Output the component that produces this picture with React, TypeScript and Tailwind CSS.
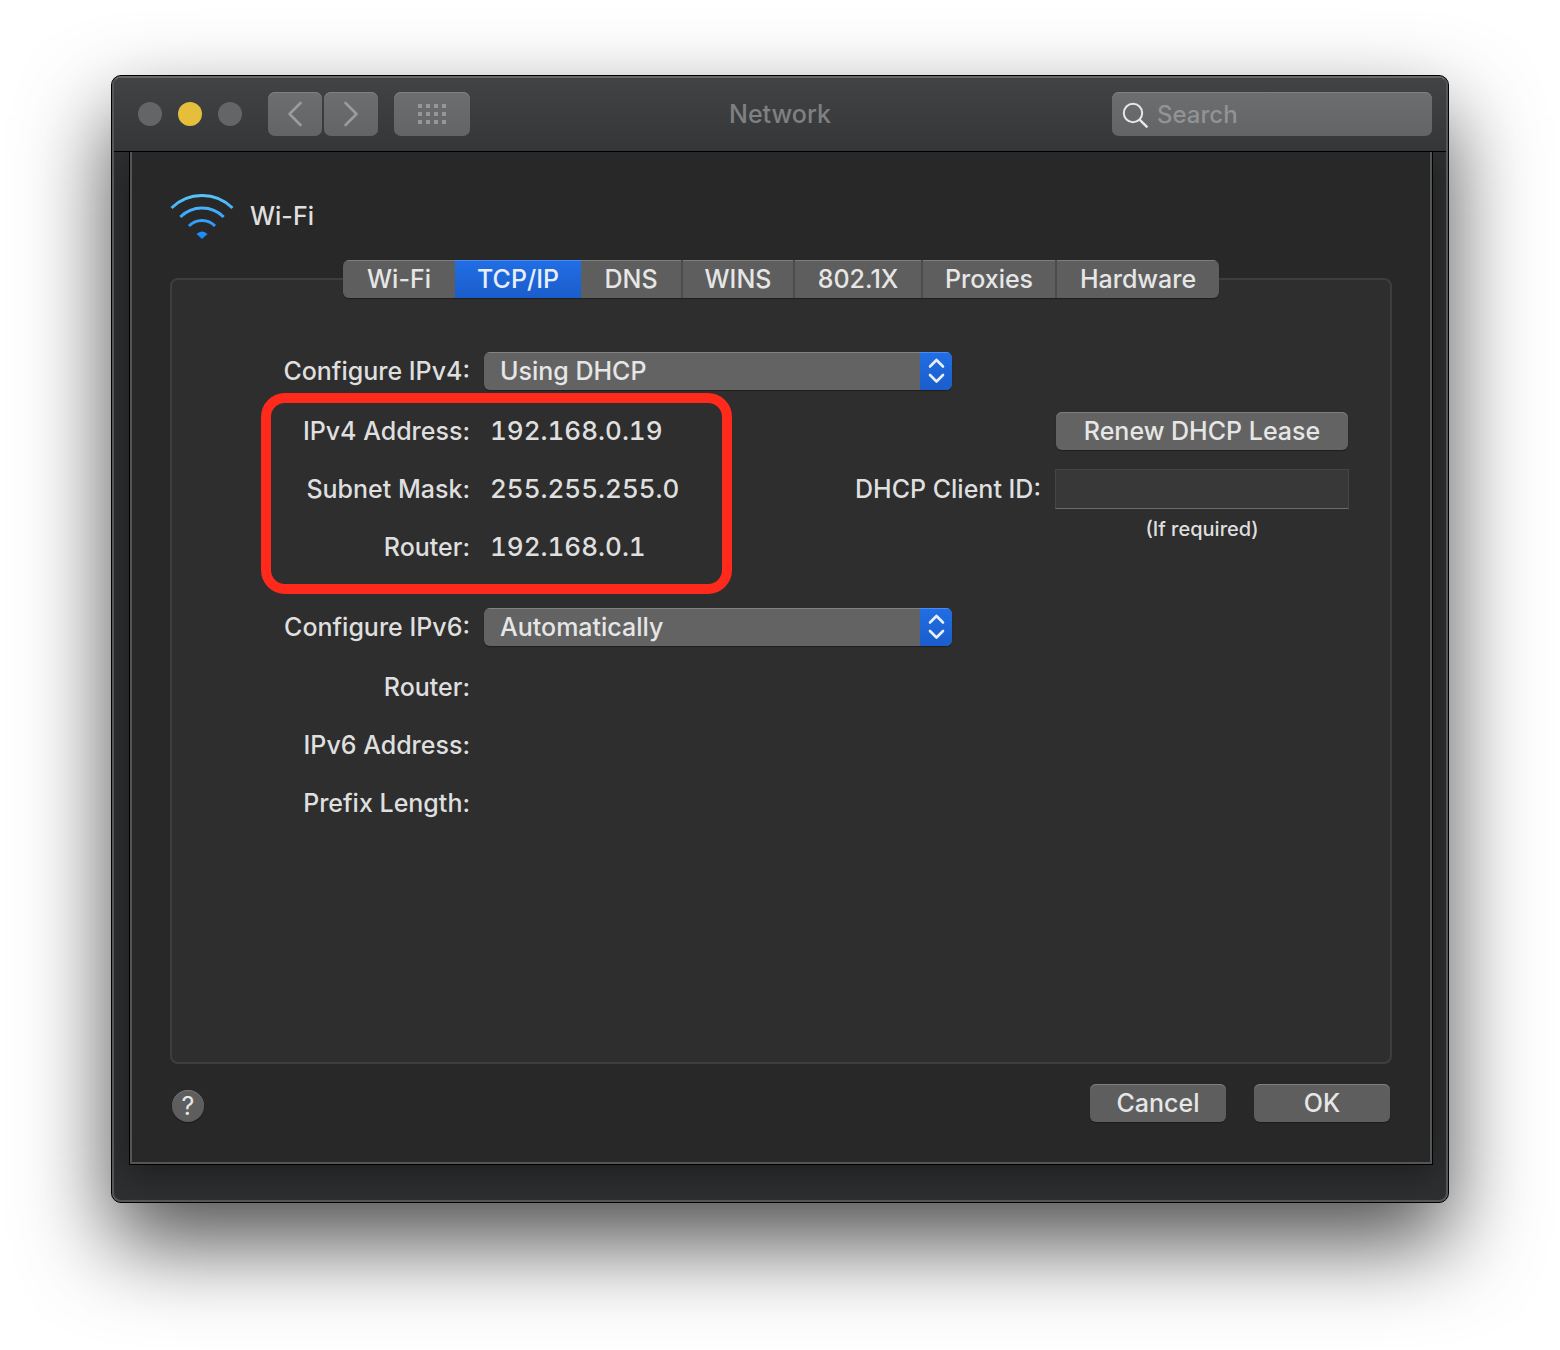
import { useState } from "react";
import type { ReactNode } from "react";
import clsx from "clsx";

const TABS = [
  { name: "Wi-Fi", width: "w-[112px]" },
  { name: "TCP/IP", width: "w-[126px]" },
  { name: "DNS", width: "w-[102px]" },
  { name: "WINS", width: "w-[112px]" },
  { name: "802.1X", width: "w-[128px]" },
  { name: "Proxies", width: "w-[134px]" },
  { name: "Hardware", width: "w-[162px]" },
];

const IPV4_ROWS = [
  { label: "IPv4 Address:", value: "192.168.0.19" },
  { label: "Subnet Mask:", value: "255.255.255.0" },
  { label: "Router:", value: "192.168.0.1" },
];

const IPV6_ROWS = [
  { label: "Router:", value: "" },
  { label: "IPv6 Address:", value: "" },
  { label: "Prefix Length:", value: "" },
];

function WifiIcon() {
  return (
    <svg width="64" height="46" viewBox="0 0 64 46" fill="none" aria-hidden="true">
      <defs>
        <linearGradient id="wifi" x1="0" y1="0" x2="0" y2="46" gradientUnits="userSpaceOnUse">
          <stop offset="0" stopColor="#5ac8fa" />
          <stop offset="0.6" stopColor="#34a0fb" />
          <stop offset="1" stopColor="#1a84fb" />
        </linearGradient>
      </defs>
      <g stroke="url(#wifi)" strokeWidth="3">
        <path d="M1.5 15A43.5 43.5 0 0 1 62.5 15" />
        <path d="M10.3 24A30.5 30.5 0 0 1 53.7 24" />
        <path d="M19 33A18 18 0 0 1 45 33" />
      </g>
      <path d="M26.5 41Q32 36 37.5 41L32 46Z" fill="url(#wifi)" />
    </svg>
  );
}

function ToolbarButton({ label, className, children }: { label: string; className: string; children: ReactNode }) {
  return (
    <button
      type="button"
      aria-label={label}
      className={clsx(
        "flex h-[44px] items-center justify-center rounded-[7px] bg-linear-to-b from-[#6d6e70] to-[#636466] shadow-[inset_0_1px_0_#808183]",
        className,
      )}
    >
      {children}
    </button>
  );
}

function PushButton({ className, children }: { className: string; children: ReactNode }) {
  return (
    <button
      type="button"
      className={clsx(
        "h-[38px] rounded-md text-[#e6e6e6] shadow-[inset_0_1px_0_#7d7d7d,0_1px_1px_rgba(0,0,0,0.35)]",
        className,
      )}
    >
      {children}
    </button>
  );
}

function TitleBar() {
  return (
    <header className="relative z-10 grid grid-cols-[1fr_auto_1fr] items-center border-b border-black bg-linear-to-b from-[#424345] to-[#353638] px-[14px] pt-[14px] pb-[15px]">
      <div className="flex items-center pl-[10px]">
        <div className="flex gap-4">
          <button type="button" aria-label="Close" className="size-6 rounded-full bg-[#646566]" />
          <button type="button" aria-label="Minimize" className="size-6 rounded-full bg-[#e5bf3c]" />
          <button type="button" aria-label="Zoom" className="size-6 rounded-full bg-[#646566]" />
        </div>
        <div className="ml-[26px] flex gap-[2px]">
          <ToolbarButton label="Back" className="w-[54px]">
            <svg width="16" height="26" viewBox="0 0 16 26" fill="none" stroke="#9a9b9c" strokeWidth="2.6" strokeLinecap="round" strokeLinejoin="round">
              <path d="M13.5 2L2.5 13L13.5 24" />
            </svg>
          </ToolbarButton>
          <ToolbarButton label="Forward" className="w-[54px]">
            <svg width="16" height="26" viewBox="0 0 16 26" fill="none" stroke="#9a9b9c" strokeWidth="2.6" strokeLinecap="round" strokeLinejoin="round">
              <path d="M2.5 2L13.5 13L2.5 24" />
            </svg>
          </ToolbarButton>
        </div>
        <ToolbarButton label="Show All" className="ml-4 w-[76px]">
          <svg width="28" height="20" viewBox="0 0 28 20" fill="#969798">
            {[0, 8, 16].map((y) =>
              [0, 8, 16, 24].map((x) => <rect key={`${x}-${y}`} x={x} y={y} width="4" height="4" />),
            )}
          </svg>
        </ToolbarButton>
      </div>
      <h1 className="text-[#7f8081]">Network</h1>
      <div className="relative w-[320px] justify-self-end">
        <svg className="pointer-events-none absolute top-[10px] left-[10px]" width="27" height="27" viewBox="0 0 27 27" fill="none" stroke="#e8e8e8" strokeWidth="2">
          <circle cx="11" cy="11" r="9.2" />
          <path d="M17.6 17.6L25.4 25.4" strokeWidth="2.4" />
        </svg>
        <input
          type="search"
          aria-label="Search"
          placeholder="Search"
          className="block h-[44px] w-full rounded-[7px] bg-linear-to-b from-[#6d6e70] to-[#636466] pr-3 pl-[45px] text-[24px] text-[#e6e6e6] shadow-[inset_0_1px_0_#808183] outline-none placeholder:text-[#929394]"
        />
      </div>
    </header>
  );
}

function PopUp({ id, label, options }: { id: string; label: string; options: string[] }) {
  return (
    <div className="flex items-center gap-[14px]">
      <label htmlFor={id} className="w-[298px] text-right">
        {label}
      </label>
      <div className="relative w-[468px] overflow-hidden rounded-md shadow-[0_1px_1px_rgba(0,0,0,0.35)]">
        <select
          id={id}
          className="block h-[38px] w-full appearance-none bg-[#636363] pr-10 pl-4 text-[#e6e6e6] shadow-[inset_0_1px_0_#828282] outline-none"
        >
          {options.map((option) => (
            <option key={option}>{option}</option>
          ))}
        </select>
        <span className="pointer-events-none absolute inset-y-0 right-0 flex w-8 items-center justify-center bg-linear-to-b from-[#216ee6] to-[#1b5dcb] shadow-[inset_0_1px_0_#4c8cf0]">
          <svg width="18" height="26" viewBox="0 0 18 26" fill="none" stroke="#e8eefa" strokeWidth="2.6" strokeLinecap="round" strokeLinejoin="round">
            <path d="M3 8.5L9.5 2L16 8.5" />
            <path d="M3 17L9.5 23.5L16 17" />
          </svg>
        </span>
      </div>
    </div>
  );
}

function InfoRows({ rows }: { rows: { label: string; value: string }[] }) {
  return (
    <dl>
      {rows.map((row) => (
        <div key={row.label} className="flex h-[58px] items-center gap-5">
          <dt className="w-[298px] text-right">{row.label}</dt>
          <dd className="text-[26px] tabular-nums">{row.value}</dd>
        </div>
      ))}
    </dl>
  );
}

function TcpIpPane() {
  return (
    <form className="pt-[72px] pb-[230px]" onSubmit={(e) => e.preventDefault()}>
      <PopUp
        id="ipv4"
        label="Configure IPv4:"
        options={["Using DHCP", "Using DHCP with manual address", "Using BootP", "Manually", "Off"]}
      />
      <div className="mt-3 flex justify-between">
        <div className="relative">
          <InfoRows rows={IPV4_ROWS} />
          {/* highlight around the address block */}
          <div className="pointer-events-none absolute -top-[9px] left-[89px] h-[201px] w-[471px] rounded-[24px] border-[10px] border-[#ff2a1c]" />
        </div>
        <div className="grid grid-cols-[auto_294px] content-start items-center gap-x-[14px] pt-[10px] pr-[41px]">
          <PushButton className="col-start-2 mx-px bg-[#636363]">Renew DHCP Lease</PushButton>
          <label htmlFor="client-id" className="mt-[19px]">
            DHCP Client ID:
          </label>
          <input
            id="client-id"
            type="text"
            aria-describedby="client-id-hint"
            className="mt-[19px] h-10 w-full border border-[#454545] border-b-[#6a6a6a] bg-[#383838] px-2 outline-none"
          />
          <p id="client-id-hint" className="col-start-2 mt-2 text-center text-[20px] leading-6">
            (If required)
          </p>
        </div>
      </div>
      <div className="mt-8 mb-3">
        <PopUp id="ipv6" label="Configure IPv6:" options={["Automatically", "Manually", "Link-local only"]} />
      </div>
      <InfoRows rows={IPV6_ROWS} />
    </form>
  );
}

export default function App() {
  const [active, setActive] = useState("TCP/IP");

  return (
    <div className="min-h-screen overflow-hidden bg-white px-[111px] pt-[75px] pb-[147px] font-['Inter','Liberation_Sans',sans-serif] text-[25px] leading-8 font-[450] text-[#dfdfdf]">
      <div className="rounded-[10px] border border-black bg-[#2e2f31] shadow-[0_40px_88px_rgba(0,0,0,0.69)]">
        <div className="overflow-hidden rounded-[9px] border-2 border-[#555658] border-t-[#67686a]">
          <TitleBar />
          <main className="mr-[13px] mb-[35px] ml-[15px] border border-t-0 border-black shadow-[0_8px_32px_rgba(0,0,0,0.4)]">
            <div className="border-2 border-t-0 border-[#555555] bg-[#282828] px-[38px] pt-[41px] pb-10">
              <div className="flex items-center gap-4">
                <WifiIcon />
                <h2>Wi-Fi</h2>
              </div>

              <div role="tablist" className="relative z-10 mx-auto mt-[21px] flex w-fit overflow-hidden rounded-md shadow-[0_1px_1px_rgba(0,0,0,0.35)]">
                {TABS.map((tab, i) => (
                  <button
                    key={tab.name}
                    type="button"
                    role="tab"
                    aria-selected={tab.name === active}
                    onClick={() => setActive(tab.name)}
                    className={clsx(
                      "h-[38px]",
                      tab.width,
                      tab.name === active
                        ? "bg-linear-to-b from-[#216ee6] to-[#1b5dcb] text-[#e8eefa] shadow-[inset_0_1px_0_#4c8cf0]"
                        : "bg-[#5e5e5e] text-[#e6e6e6] shadow-[inset_0_1px_0_#7d7d7d]",
                      i > 1 && i < TABS.length - 1 && "border-r-2 border-[#4c4c4c]",
                    )}
                  >
                    {tab.name}
                  </button>
                ))}
              </div>
              <section className="-mt-5 rounded-lg border-2 border-[#3e3e3e] bg-[#2e2e2e]">
                <TcpIpPane />
              </section>

              <footer className="mt-5 flex items-end justify-between px-[2px]">
                <button
                  type="button"
                  aria-label="Help"
                  className="size-8 rounded-full bg-[#5e5e5e] font-normal text-[#e6e6e6] shadow-[inset_0_1px_0_#737373,0_1px_1px_rgba(0,0,0,0.35)]"
                >
                  ?
                </button>
                <div className="flex gap-7">
                  <PushButton className="w-[136px] bg-[#5e5e5e]">Cancel</PushButton>
                  <PushButton className="w-[136px] bg-[#5e5e5e]">OK</PushButton>
                </div>
              </footer>
            </div>
          </main>
        </div>
      </div>
    </div>
  );
}
